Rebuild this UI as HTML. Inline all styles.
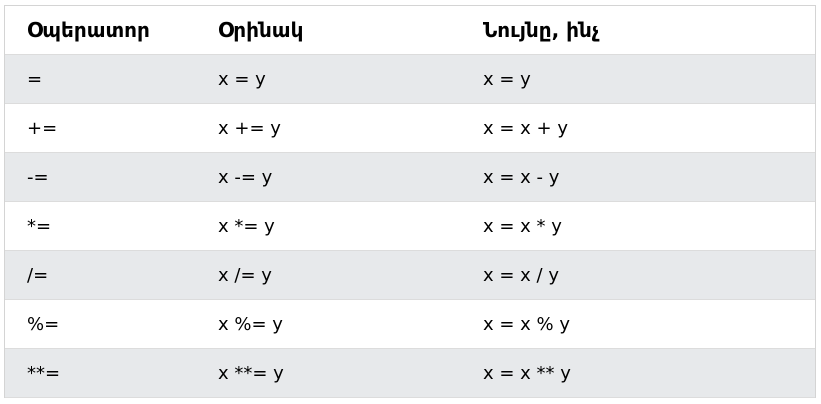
<!DOCTYPE html>
<html><head><meta charset="utf-8"><style>
html,body{margin:0;padding:0;background:#fff;width:821px;height:404px;overflow:hidden}
.t{position:absolute;left:4px;top:5px;width:810px;border:1px solid #d4d4d4;border-bottom:none;font-family:"DejaVu Sans",sans-serif;font-size:18px;color:#000}
.r{height:48px;border-bottom:1px solid #dcdcdc;position:relative;line-height:50px}
.r span{position:absolute;top:0}
.r span:nth-child(1){left:22px}
.r span:nth-child(2){left:213px}
.r span:nth-child(3){left:478px}
.h{font-weight:bold;font-size:20px;line-height:48px}
.r:nth-child(even){background:#e7e9eb}
</style></head><body>
<div class="t">
<div class="r h"><span>Օպերատոր</span><span>Օրինակ</span><span>Նույնը, ինչ</span></div>
<div class="r"><span>=</span><span>x = y</span><span>x = y</span></div>
<div class="r"><span>+=</span><span>x += y</span><span>x = x + y</span></div>
<div class="r"><span>-=</span><span>x -= y</span><span>x = x - y</span></div>
<div class="r"><span>*=</span><span>x *= y</span><span>x = x * y</span></div>
<div class="r"><span>/=</span><span>x /= y</span><span>x = x / y</span></div>
<div class="r"><span>%=</span><span>x %= y</span><span>x = x % y</span></div>
<div class="r"><span>**=</span><span>x **= y</span><span>x = x ** y</span></div>
</div>
</body></html>
